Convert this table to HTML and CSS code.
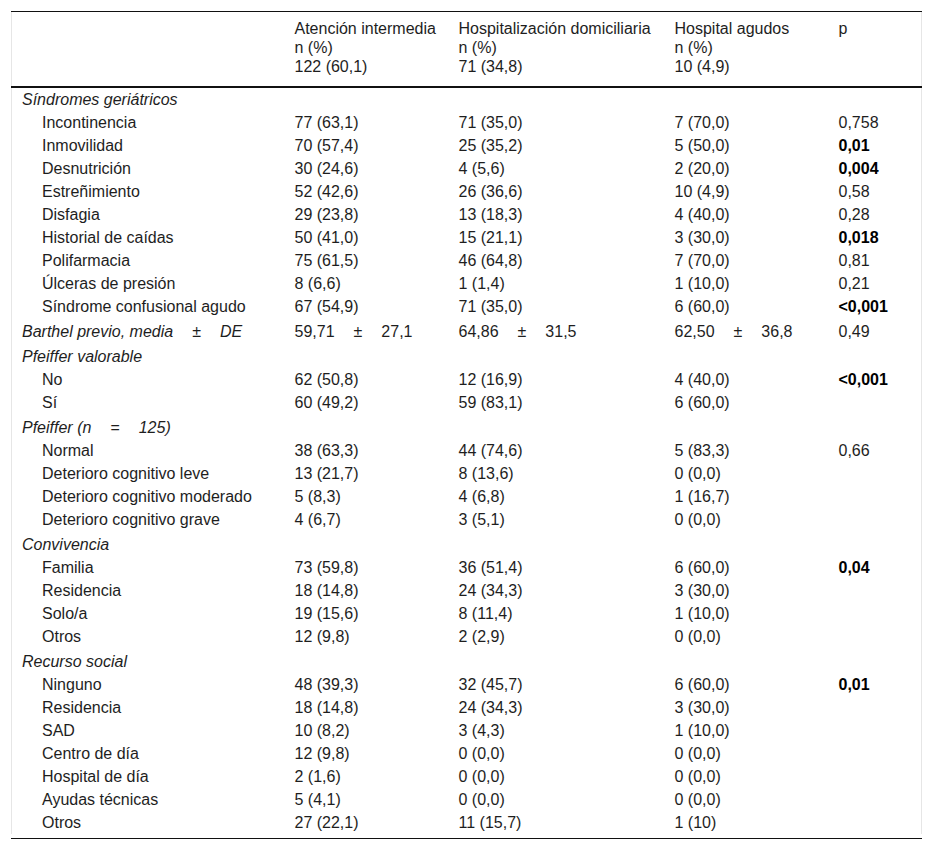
FILE: index.html
```html
<!DOCTYPE html>
<html lang="es">
<head>
<meta charset="utf-8">
<title>Tabla</title>
<link rel="stylesheet" href="styles.css">
</head>
<body>
<div class="wrap">
<table class="data">
<colgroup>
<col class="c0"><col class="c1"><col class="c2"><col class="c3"><col class="c4">
</colgroup>
<thead>
<tr>
<th></th>
<th>Atención intermedia<br>n (%)<br>122 (60,1)</th>
<th>Hospitalización domiciliaria<br>n (%)<br>71 (34,8)</th>
<th>Hospital agudos<br>n (%)<br>10 (4,9)</th>
<th>p</th>
</tr>
</thead>
<tbody>
<tr class="cat first"><td>Síndromes geriátricos</td><td></td><td></td><td></td><td></td></tr>
<tr><td class="ind">Incontinencia</td><td>77 (63,1)</td><td>71 (35,0)</td><td>7 (70,0)</td><td>0,758</td></tr>
<tr><td class="ind">Inmovilidad</td><td>70 (57,4)</td><td>25 (35,2)</td><td>5 (50,0)</td><td><b>0,01</b></td></tr>
<tr><td class="ind">Desnutrición</td><td>30 (24,6)</td><td>4 (5,6)</td><td>2 (20,0)</td><td><b>0,004</b></td></tr>
<tr><td class="ind">Estreñimiento</td><td>52 (42,6)</td><td>26 (36,6)</td><td>10 (4,9)</td><td>0,58</td></tr>
<tr><td class="ind">Disfagia</td><td>29 (23,8)</td><td>13 (18,3)</td><td>4 (40,0)</td><td>0,28</td></tr>
<tr><td class="ind">Historial de caídas</td><td>50 (41,0)</td><td>15 (21,1)</td><td>3 (30,0)</td><td><b>0,018</b></td></tr>
<tr><td class="ind">Polifarmacia</td><td>75 (61,5)</td><td>46 (64,8)</td><td>7 (70,0)</td><td>0,81</td></tr>
<tr><td class="ind">Úlceras de presión</td><td>8 (6,6)</td><td>1 (1,4)</td><td>1 (10,0)</td><td>0,21</td></tr>
<tr><td class="ind">Síndrome confusional agudo</td><td>67 (54,9)</td><td>71 (35,0)</td><td>6 (60,0)</td><td><b>&lt;0,001</b></td></tr>
<tr class="cat"><td>Barthel previo, media<span class="op">±</span>DE</td><td>59,71<span class="op">±</span>27,1</td><td>64,86<span class="op">±</span>31,5</td><td>62,50<span class="op">±</span>36,8</td><td>0,49</td></tr>
<tr class="cat"><td>Pfeiffer valorable</td><td></td><td></td><td></td><td></td></tr>
<tr><td class="ind">No</td><td>62 (50,8)</td><td>12 (16,9)</td><td>4 (40,0)</td><td><b>&lt;0,001</b></td></tr>
<tr><td class="ind">Sí</td><td>60 (49,2)</td><td>59 (83,1)</td><td>6 (60,0)</td><td></td></tr>
<tr class="cat"><td>Pfeiffer (n<span class="op">=</span>125)</td><td></td><td></td><td></td><td></td></tr>
<tr><td class="ind">Normal</td><td>38 (63,3)</td><td>44 (74,6)</td><td>5 (83,3)</td><td>0,66</td></tr>
<tr><td class="ind">Deterioro cognitivo leve</td><td>13 (21,7)</td><td>8 (13,6)</td><td>0 (0,0)</td><td></td></tr>
<tr><td class="ind">Deterioro cognitivo moderado</td><td>5 (8,3)</td><td>4 (6,8)</td><td>1 (16,7)</td><td></td></tr>
<tr><td class="ind">Deterioro cognitivo grave</td><td>4 (6,7)</td><td>3 (5,1)</td><td>0 (0,0)</td><td></td></tr>
<tr class="cat"><td>Convivencia</td><td></td><td></td><td></td><td></td></tr>
<tr><td class="ind">Familia</td><td>73 (59,8)</td><td>36 (51,4)</td><td>6 (60,0)</td><td><b>0,04</b></td></tr>
<tr><td class="ind">Residencia</td><td>18 (14,8)</td><td>24 (34,3)</td><td>3 (30,0)</td><td></td></tr>
<tr><td class="ind">Solo/a</td><td>19 (15,6)</td><td>8 (11,4)</td><td>1 (10,0)</td><td></td></tr>
<tr><td class="ind">Otros</td><td>12 (9,8)</td><td>2 (2,9)</td><td>0 (0,0)</td><td></td></tr>
<tr class="cat"><td>Recurso social</td><td></td><td></td><td></td><td></td></tr>
<tr><td class="ind">Ninguno</td><td>48 (39,3)</td><td>32 (45,7)</td><td>6 (60,0)</td><td><b>0,01</b></td></tr>
<tr><td class="ind">Residencia</td><td>18 (14,8)</td><td>24 (34,3)</td><td>3 (30,0)</td><td></td></tr>
<tr><td class="ind">SAD</td><td>10 (8,2)</td><td>3 (4,3)</td><td>1 (10,0)</td><td></td></tr>
<tr><td class="ind">Centro de día</td><td>12 (9,8)</td><td>0 (0,0)</td><td>0 (0,0)</td><td></td></tr>
<tr><td class="ind">Hospital de día</td><td>2 (1,6)</td><td>0 (0,0)</td><td>0 (0,0)</td><td></td></tr>
<tr><td class="ind">Ayudas técnicas</td><td>5 (4,1)</td><td>0 (0,0)</td><td>0 (0,0)</td><td></td></tr>
<tr><td class="ind">Otros</td><td>27 (22,1)</td><td>11 (15,7)</td><td>1 (10)</td><td></td></tr>
</tbody>
</table>
</div>
</body>
</html>
```

FILE: styles.css
```css
html, body {
  background: #ffffff;
}
body {
  margin: 11px;
  font-family: "Liberation Sans", Arial, sans-serif;
  font-size: 16px;
  color: #1e1e1e;
}
.wrap {
  border-top: 1px solid #111111;
  border-bottom: 1px solid #111111;
  padding-bottom: 4px;
}
.data {
  width: 100%;
  border-collapse: collapse;
  table-layout: fixed;
  border-left: 1px solid #e6e6e6;
  border-right: 1px solid #e6e6e6;
}
.c0 { width: 273px; }
.c1 { width: 164px; }
.c2 { width: 216px; }
.c3 { width: 164px; }
.c4 { width: auto; }
.data th {
  font-weight: normal;
  text-align: left;
  vertical-align: top;
  line-height: 19px;
  padding: 7px 4px 10px 10px;
  border-bottom: 2px solid #111111;
}
.data td {
  padding: 3px 4px 3px 10px;
  line-height: 17px;
  height: 17px;
  white-space: nowrap;
  vertical-align: top;
}
.data tr.cat td {
  padding-top: 5px;
}
.data tr.cat.first td {
  padding-top: 3px;
}
.data tr.cat td:first-child {
  font-style: italic;
}
.data td.ind {
  padding-left: 30px;
}
.data b {
  color: #000000;
  font-weight: bold;
}
.op {
  margin: 0 19px;
}
```
